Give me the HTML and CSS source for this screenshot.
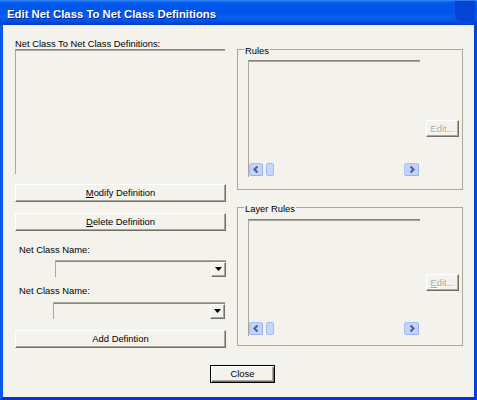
FILE: index.html
```html
<!DOCTYPE html>
<html>
<head>
<meta charset="utf-8">
<link rel="stylesheet" href="styles.css">
</head>
<body>
<div class="window">
  <div class="titlebar">
    <span class="title">Edit Net Class To Net Class Definitions</span>
    <span class="tb-corner"></span>
  </div>
  <div class="client">
    <div class="main">
      <div class="col-left">
        <div class="label label-list">Net Class To Net Class Definitions:</div>
        <div class="sunken listbox"></div>
        <button class="btn btn-wide btn-modify"><u>M</u>odify Definition</button>
        <button class="btn btn-wide btn-delete"><u>D</u>elete Definition</button>
        <div class="label label-name1">Net Class Name:</div>
        <div class="combo combo1">
          <span class="drop"><svg width="7" height="4" viewBox="0 0 7 4"><path d="M0 0h7L3.5 4z" fill="#000"/></svg></span>
        </div>
        <div class="label label-name2">Net Class Name:</div>
        <div class="combo combo2">
          <span class="drop"><svg width="7" height="4" viewBox="0 0 7 4"><path d="M0 0h7L3.5 4z" fill="#000"/></svg></span>
        </div>
        <button class="btn btn-wide btn-add">Add Defintion</button>
      </div>
      <div class="col-right">
        <div class="group group-rules">
          <span class="legend">Rules</span>
          <div class="listview">
            <div class="scrollbar">
              <div class="sb-left">
                <svg class="sb-arrow" width="15" height="13" viewBox="0 0 15 13"><rect x="0.5" y="0.5" width="13" height="12" rx="1.5" fill="#C1D2FC" stroke="#A9C0F5"/><path d="M13.5 1.5v11h-12" stroke="#98B2EC" fill="none"/><path d="M8.5 3.5L5.5 6.5L8.5 9.5" stroke="#4D6185" stroke-width="2" fill="none"/></svg>
                <svg class="sb-thumb" width="8" height="13" viewBox="0 0 8 13"><rect x="0.5" y="0.5" width="7" height="12" rx="1.5" fill="#C6D6FC" stroke="#A3BAF2"/></svg>
              </div>
              <svg class="sb-arrow" width="16" height="13" viewBox="0 0 16 13"><rect x="0.5" y="0.5" width="14" height="12" rx="1.5" fill="#C1D2FC" stroke="#A9C0F5"/><path d="M14.5 1.5v11h-13" stroke="#98B2EC" fill="none"/><path d="M6.5 3.5L9.5 6.5L6.5 9.5" stroke="#4D6185" stroke-width="2" fill="none"/></svg>
            </div>
          </div>
          <button class="btn btn-edit btn-edit-rules" disabled>Edit...</button>
        </div>
        <div class="group group-layer">
          <span class="legend">Layer Rules</span>
          <div class="listview">
            <div class="scrollbar">
              <div class="sb-left">
                <svg class="sb-arrow" width="15" height="13" viewBox="0 0 15 13"><rect x="0.5" y="0.5" width="13" height="12" rx="1.5" fill="#C1D2FC" stroke="#A9C0F5"/><path d="M13.5 1.5v11h-12" stroke="#98B2EC" fill="none"/><path d="M8.5 3.5L5.5 6.5L8.5 9.5" stroke="#4D6185" stroke-width="2" fill="none"/></svg>
                <svg class="sb-thumb" width="8" height="13" viewBox="0 0 8 13"><rect x="0.5" y="0.5" width="7" height="12" rx="1.5" fill="#C6D6FC" stroke="#A3BAF2"/></svg>
              </div>
              <svg class="sb-arrow" width="16" height="13" viewBox="0 0 16 13"><rect x="0.5" y="0.5" width="14" height="12" rx="1.5" fill="#C1D2FC" stroke="#A9C0F5"/><path d="M14.5 1.5v11h-13" stroke="#98B2EC" fill="none"/><path d="M6.5 3.5L9.5 6.5L6.5 9.5" stroke="#4D6185" stroke-width="2" fill="none"/></svg>
            </div>
          </div>
          <button class="btn btn-edit btn-edit-layer" disabled><u>E</u>dit...</button>
        </div>
      </div>
    </div>
    <div class="footer">
      <button class="btn btn-close">Close</button>
    </div>
  </div>
</div>
</body>
</html>
```
FILE: styles.css
```css
* { box-sizing: border-box; }
html, body { margin: 0; padding: 0; background: #F3F2EC; }
body {
  font-family: "Liberation Sans", Arial, sans-serif;
  font-size: 9.4px;
  color: #000;
}
.window {
  width: 477px;
  height: 400px;
  display: flex;
  flex-direction: column;
  position: relative;
  background: #F3F2EC;
}
.titlebar {
  position: relative;
  height: 25px;
  flex: none;
  padding: 7px 0 0 7px;
  line-height: 14px;
  white-space: nowrap;
  background: linear-gradient(180deg, #3C8FF5 0px, #0A5EF0 2px, #0055EA 5px, #0055EA 13px, #0A60F2 17px, #0053E6 21px, #0045D3 23px, #003FC8 25px);
}
.title {
  font-weight: bold;
  font-size: 11.35px;
  color: #fff;
  text-shadow: 1px 1px 0 #0A1D8A;
}
.tb-corner {
  position: absolute;
  right: 2px;
  top: 1px;
  width: 20px;
  height: 21px;
  border-radius: 0 0 0 8px;
  background: #0744D6;
  box-shadow: -2px 1px 3px #1454E0;
}
.client {
  flex: 1;
  display: flex;
  flex-direction: column;
  border-style: solid;
  border-width: 0 3px 3px 3px;
  border-color: #0858EE #0046D8 #0831D9 #0858EE;
  padding: 13px 11px 0 12px;
}
.main {
  display: flex;
  align-items: flex-start;
  gap: 11px;
}
.col-left {
  width: 211px;
  display: flex;
  flex-direction: column;
  align-items: flex-start;
}
.label {
  height: 11px;
  line-height: 11px;
  white-space: nowrap;
}
.sunken {
  border-top: 1px solid #8A877E;
  border-left: 1px solid #A9A69C;
  box-shadow: inset 0 1px 0 #ACA899;
}
.listbox {
  width: 210px;
  height: 125px;
}
.btn {
  font: inherit;
  color: #000;
  background: #F3F2EC;
  border: 1px solid;
  border-color: #fff #716F64 #716F64 #fff;
  box-shadow: inset -1px -1px 0 #ACA899;
  padding: 0;
  margin: 0;
  height: 18px;
  line-height: 16px;
  text-align: center;
  white-space: nowrap;
}
.btn-wide { width: 211px; }
.btn-modify { margin-top: 10px; }
.btn-delete { margin-top: 11px; }
.label-name1 { margin: 13px 0 0 4px; }
.label-name2 { margin: 8px 0 0 4px; }
.combo {
  height: 17px;
  display: flex;
  justify-content: flex-end;
  align-items: flex-end;
  border-top: 1px solid #ACA899;
  border-left: 1px solid #ACA899;
  box-shadow: inset 0 1px 0 #8A877E;
}
.combo1 { margin: 5px 0 0 40px; width: 171px; }
.combo2 { margin: 6px 0 0 38px; width: 172px; }
.drop {
  width: 15px;
  height: 15px;
  display: flex;
  align-items: center;
  justify-content: center;
  border: 1px solid;
  border-color: #fff #716F64 #716F64 #fff;
  box-shadow: inset -1px -1px 0 #ACA899;
  padding: 0 1px 1px 0;
}
.drop svg { display: block; }
.btn-add { margin-top: 11px; }
.col-right {
  width: 226px;
  margin-top: 11px;
  display: flex;
  flex-direction: column;
}
.group {
  position: relative;
  width: 226px;
  border: 1px solid #ACA899;
  display: flex;
  align-items: flex-start;
  padding-left: 10px;
}
.group-rules { height: 141px; padding-top: 10px; }
.group-layer { height: 139px; padding-top: 11px; margin-top: 17px; }
.legend {
  position: absolute;
  top: -5px;
  left: 6px;
  padding: 0 1px;
  line-height: 11px;
  background: #F3F2EC;
  white-space: nowrap;
}
.listview {
  width: 172px;
  height: 117px;
  border-top: 1px solid #85827A;
  border-left: 1px solid #ACA899;
  box-shadow: inset 0 1px 0 #A8A69C;
  display: flex;
  flex-direction: column;
  justify-content: flex-end;
  padding-bottom: 1px;
}
.scrollbar {
  display: flex;
  justify-content: space-between;
  height: 13px;
}
.sb-left {
  display: flex;
  gap: 2px;
}
.scrollbar svg { display: block; }
.btn-edit {
  width: 33px;
  height: 17px;
  line-height: 15px;
  margin-left: 6px;
  color: #ACA899;
  text-shadow: 1px 1px 0 #fff;
}
.btn-edit-rules { margin-top: 60px; }
.btn-edit-layer { margin-top: 55px; }
.footer {
  display: flex;
  margin-top: 17px;
  padding-left: 195px;
}
.btn-close {
  width: 65px;
  height: 18px;
  border: 1px solid #000;
  box-shadow: inset 1px 1px 0 #fff, inset -1px -1px 0 #716F64, inset -2px -2px 0 #ACA899;
}
```
